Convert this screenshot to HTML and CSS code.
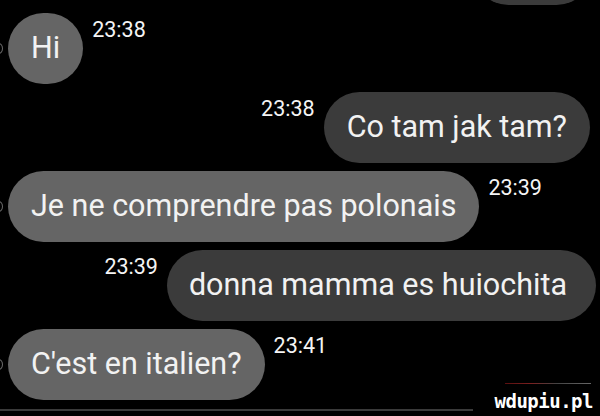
FILE: index.html
```html
<!DOCTYPE html>
<html>
<head>
<meta charset="utf-8">
<link rel="stylesheet" href="styles.css">
</head>
<body>
<div class="chat">
  <div class="row out prev"><div class="bubble dark stub"></div></div>
  <div class="row in"><span class="ring"></span><div class="bubble light">Hi</div><span class="time">23:38</span></div>
  <div class="row out"><span class="time">23:38</span><div class="bubble dark">Co tam jak tam?</div></div>
  <div class="row in"><span class="ring"></span><div class="bubble light">Je ne comprendre pas polonais</div><span class="time">23:39</span></div>
  <div class="row out edge"><span class="time">23:39</span><div class="bubble dark wide">donna mamma es huiochita</div></div>
  <div class="row in"><span class="ring"></span><div class="bubble light">C'est en italien?</div><span class="time">23:41</span></div>
  <div class="divider"></div>
</div>
<div class="watermark"><span class="wm-line"></span>wdupiu.pl</div>
</body>
</html>
```
FILE: styles.css
```css
html, body {
  margin: 0;
  padding: 0;
  background: #000;
  width: 600px;
  height: 416px;
  overflow: hidden;
  font-family: Roboto, "Noto Sans", sans-serif;
  color: #f2f2f2;
}
body { position: relative; }

.chat {
  display: flex;
  flex-direction: column;
  gap: 8px;
}

.row {
  position: relative;
  display: flex;
  align-items: flex-start;
  gap: 9px;
}
.row.in { justify-content: flex-start; padding-left: 8px; }
.row.out { justify-content: flex-end; padding-right: 10px; }
.row.out.edge { padding-right: 4px; }
.row.prev { margin-top: -66px; padding-right: 8px; }

.bubble {
  height: 71px;
  display: flex;
  align-items: center;
  padding: 0 23px;
  border-radius: 36px;
  font-size: 30.5px;
  line-height: 1;
  white-space: nowrap;
  box-sizing: border-box;
}
.bubble.light { background: #656565; }
.bubble.dark { background: #3b3b3b; }
.bubble.stub { width: 119px; }
.bubble.wide { padding: 0 29px 0 22px; }

.time {
  margin-top: 4px;
  font-size: 21.5px;
  line-height: 25px;
  color: #f4f4f4;
}

.ring {
  position: absolute;
  left: -6px;
  top: 30px;
  width: 7px;
  height: 9px;
  border-radius: 50%;
  border: 1.5px solid #6a6a6a;
}

.divider {
  margin-top: 1px;
  width: 473px;
  height: 2px;
  background: #3a3a3a;
}

.watermark {
  position: absolute;
  right: 7px;
  bottom: 7px;
  font-family: "DejaVu Sans Mono", monospace;
  font-weight: bold;
  font-size: 19px;
  line-height: 16px;
  letter-spacing: -0.5px;
  color: #fff;
}
.wm-line {
  position: absolute;
  left: 10px;
  right: 2px;
  top: -10px;
  height: 1px;
  background: linear-gradient(90deg, #5a1010 0%, #7a2020 30%, #444 60%, #666 100%);
}
```
